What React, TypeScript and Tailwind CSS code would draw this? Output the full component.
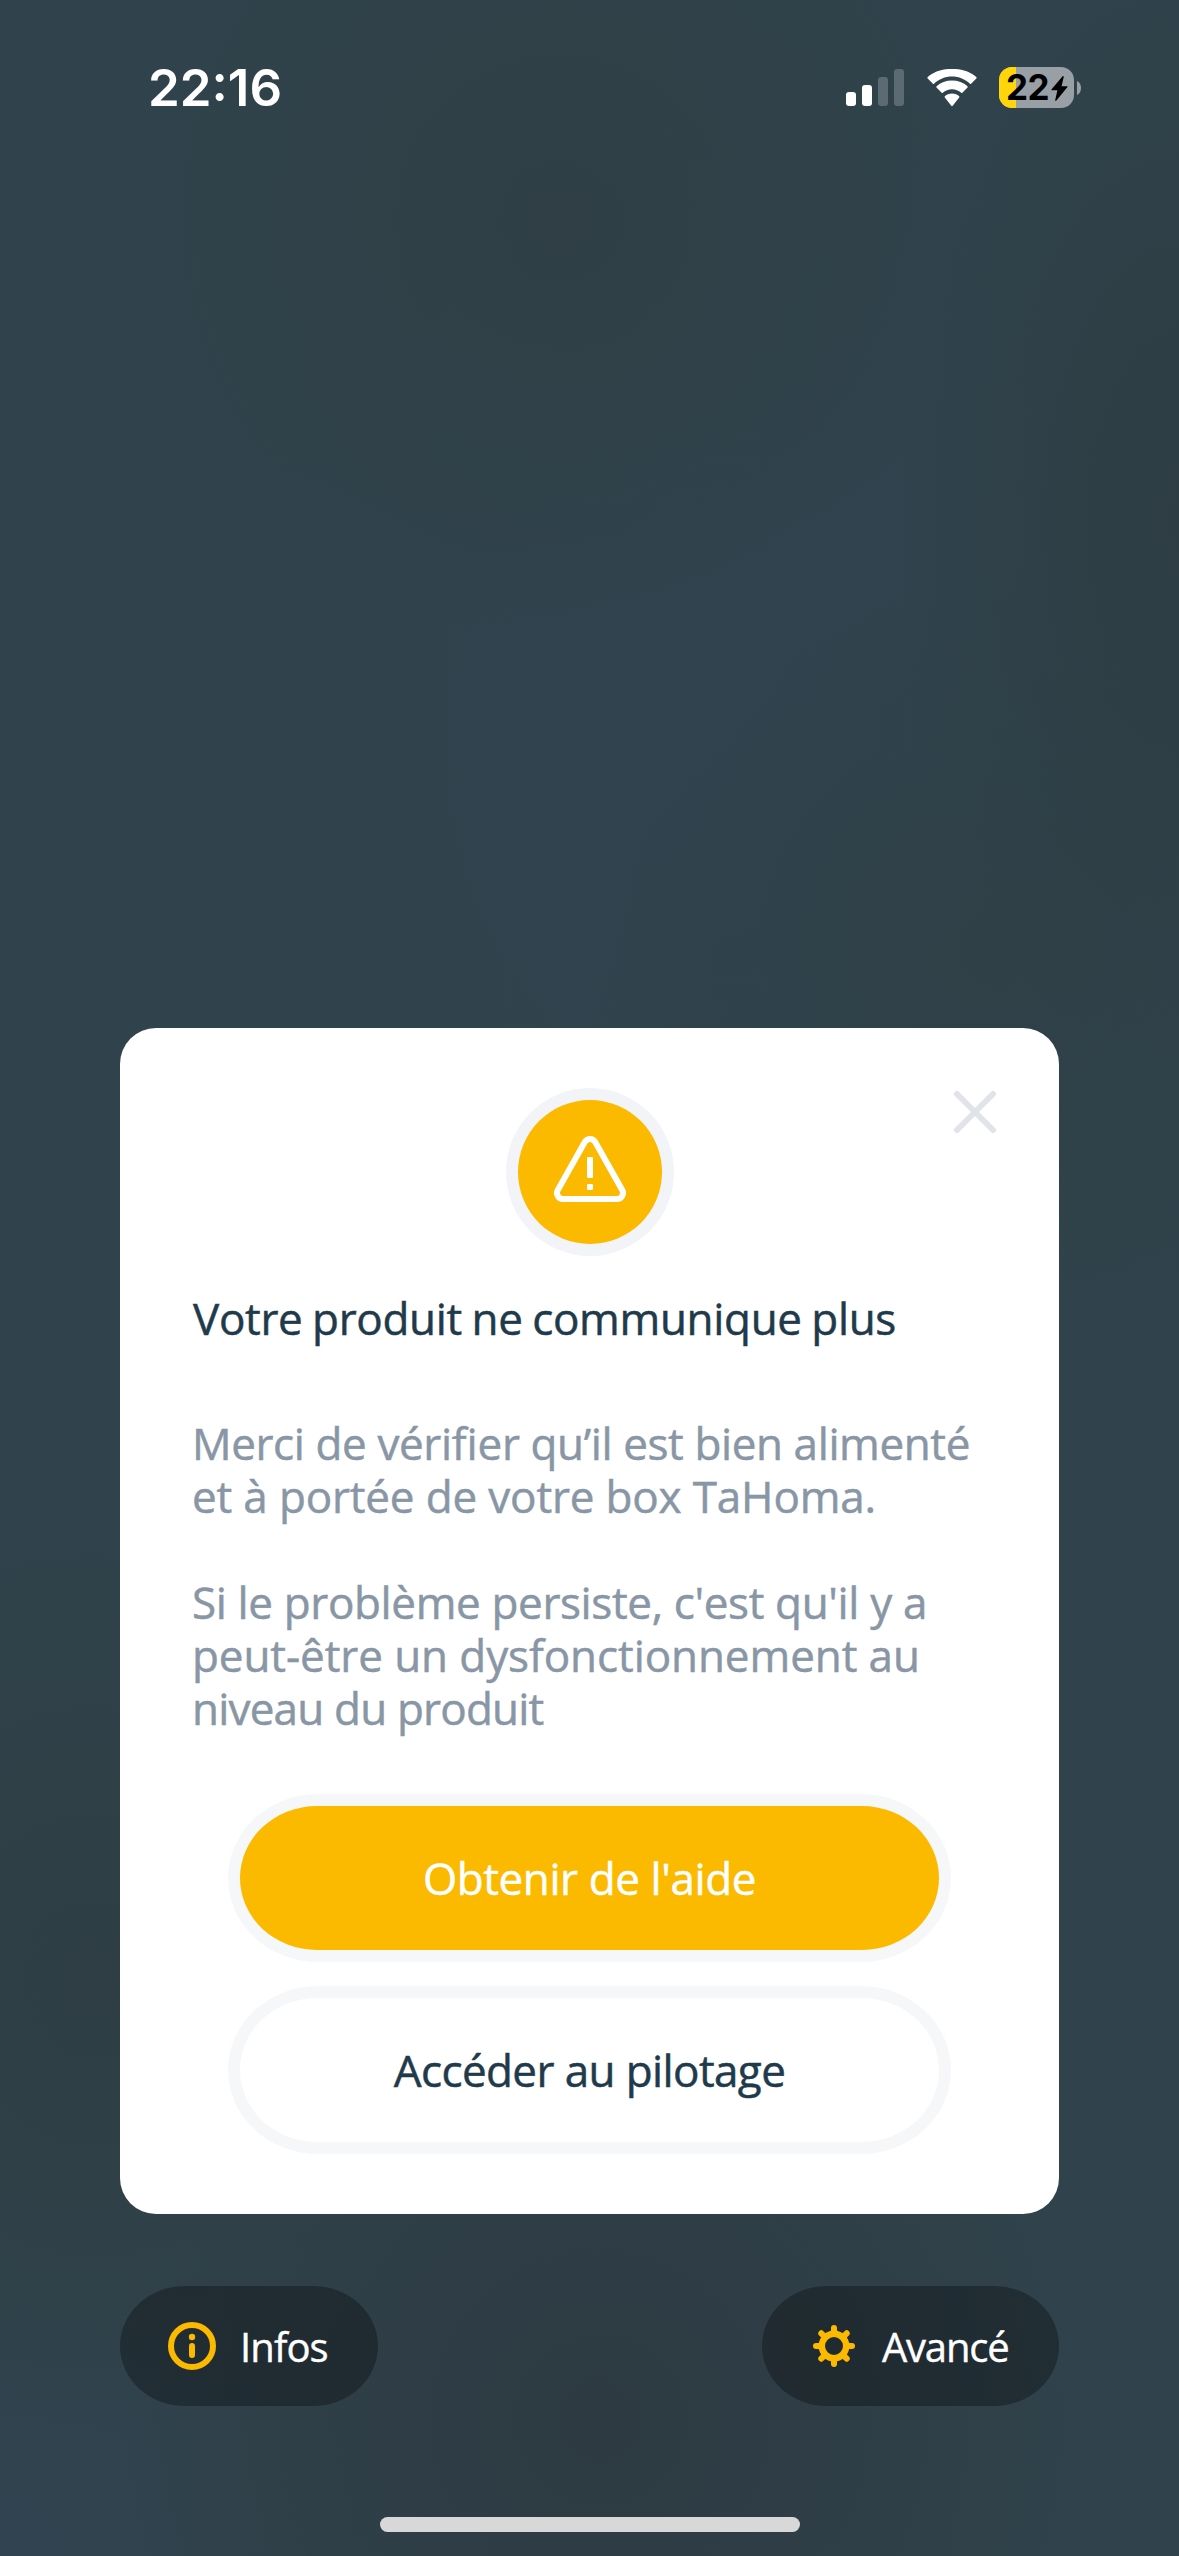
import type { ReactNode } from "react";

function SignalBars() {
  return (
    <div className="flex items-end gap-1.5">
      <div className="h-[14px] w-[10px] rounded-[3px] bg-white" />
      <div className="h-[21px] w-[10px] rounded-[3px] bg-white" />
      <div className="h-[29px] w-[10px] rounded-[3px] bg-[#5c6a73]" />
      <div className="h-[37px] w-[10px] rounded-[3px] bg-[#5c6a73]" />
    </div>
  );
}

function WifiIcon() {
  return (
    <svg className="h-[38px] w-[52px]" viewBox="0 0 52 38" fill="#fff">
      <path d="M26 7.6c6.9 0 13.200 2.700 17.900 7.100.4.3.9.3 1.200 0l5.200-5.200c.4-.4.4-1 0-1.400C43.900 2.200 35.400-.1 26-.1S8.100 2.200 1.700 8.100c-.4.4-.4 1 0 1.400l5.200 5.200c.3.3.8.3 1.200 0C12.800 10.300 19.100 7.600 26 7.600z" />
      <path d="M26 20.300c3.500 0 6.700 1.300 9.200 3.500.4.3.9.3 1.200 0l5.100-5.200c.4-.4.4-1 0-1.400-4-3.800-9.500-5.800-15.500-5.800s-11.500 2-15.500 5.800c-.4.4-.4 1 0 1.400l5.100 5.200c.3.3.8.3 1.200 0 2.500-2.200 5.700-3.500 9.200-3.500z" />
      <path d="M33.200 28.500c.4-.4.4-1 0-1.300-1.900-1.700-4.400-2.700-7.200-2.700s-5.300 1-7.200 2.700c-.4.3-.4.900 0 1.300l6.500 8.300c.4.500 1 .5 1.400 0z" />
    </svg>
  );
}

function Battery() {
  return (
    <div className="flex items-center gap-[3px]">
      <div className="relative flex h-[41px] w-[75px] items-center overflow-hidden rounded-[13px] bg-[#98a0a6] pl-[7px]">
        <div className="absolute inset-y-0 left-0 w-[17px] bg-[#ffd60a]" />
        <span className="relative font-[Inter] text-[35px] leading-[41px] font-bold tracking-[-0.6px] text-black">
          22
        </span>
        <svg className="absolute left-[51px] top-[8px] h-[27px] w-[19px]" viewBox="0 0 19 27">
          <path
            d="M12.400 1.500 1.600 14.200c-.5.6-.2 1.100.5 1.100h5.300L5.200 25c-.2 1 .6 1.300 1.200.5L17.300 12.300c.5-.6.2-1.100-.5-1.100h-5.200l2.100-9.200c.2-1-.6-1.300-1.300-.5z"
            fill="#000"
          />
        </svg>
      </div>
      <svg className="h-[14px] w-[4px]" viewBox="0 0 4 14">
        <path d="M0 0c2.300.9 4 3.600 4 7s-1.700 6.100-4 7z" fill="#98a0a6" />
      </svg>
    </div>
  );
}

function StatusBar() {
  return (
    <header className="flex h-[175px] shrink-0 items-start justify-between pl-[148px] pr-[98px]">
      <span className="mt-[58px] font-[Inter] text-[51px] leading-[60px] font-semibold text-white">
        22:16
      </span>
      <div className="mt-[67px] flex h-[41px] items-center">
        <SignalBars />
        <div className="ml-[22px] mr-[21px] flex">
          <WifiIcon />
        </div>
        <Battery />
      </div>
    </header>
  );
}

function WarningBadge() {
  return (
    <div className="flex size-[168px] items-center justify-center rounded-full bg-[#f2f4f7]">
      <div className="size-[144px] rounded-full bg-[#fbb900]">
        <svg viewBox="0 0 144 144" fill="none" className="size-full">
          <path
            d="M66.800 42a6 6 0 0 1 10.400 0L104.200 90a6 6 0 0 1-5.200 9H45a6 6 0 0 1-5.200-9z"
            stroke="#fff"
            strokeWidth="6"
          />
          <rect x="69" y="57" width="6" height="21" rx="1" fill="#fff" />
          <rect x="69" y="84" width="6" height="6" rx="1" fill="#fff" />
        </svg>
      </div>
    </div>
  );
}

function InfoIcon() {
  return (
    <svg viewBox="0 0 48 48" className="size-12" fill="none">
      <circle cx="24" cy="24" r="21" stroke="#fbb900" strokeWidth="6" />
      <circle cx="24" cy="15" r="3.200" fill="#fbb900" />
      <rect x="21" y="21" width="6" height="15" rx="3" fill="#fbb900" />
    </svg>
  );
}

const teeth = [0, 45, 90, 135, 180, 225, 270, 315];

function GearIcon() {
  return (
    <svg viewBox="0 0 48 48" className="size-12" fill="none" stroke="#fbb900">
      <circle cx="24" cy="24" r="12.200" strokeWidth="6.400" />
      {teeth.map((angle) => (
        <path
          key={angle}
          d="M24 10V6"
          strokeWidth="6"
          strokeLinecap="round"
          transform={`rotate(${angle} 24 24)`}
        />
      ))}
    </svg>
  );
}

function CloseIcon() {
  return (
    <svg viewBox="0 0 44 44" className="size-11" stroke="#e0e3e8" strokeWidth="6" strokeLinecap="round">
      <path d="M4 4l36 36M40 4L4 40" />
    </svg>
  );
}

function Pill({ icon, children }: { icon: ReactNode; children: ReactNode }) {
  return (
    <button className="flex h-[120px] items-center gap-6 rounded-[65px_/_60px] bg-black/30 pl-12 text-[40px] text-white [-webkit-text-stroke:0.4px_#fff]">
      {icon}
      <span className="pt-0.5">{children}</span>
    </button>
  );
}

export default function App() {
  return (
    <div className="relative flex h-[2556px] w-[1179px] flex-col overflow-hidden bg-[#30424b] font-['Open_Sans',sans-serif] bg-[radial-gradient(ellipse_420px_420px_at_560px_220px,#2f3f45_0%,#2f3f4500_100%),radial-gradient(ellipse_280px_560px_at_1179px_520px,#2d3d43_0%,#2d3d4300_100%),radial-gradient(ellipse_420px_400px_at_1000px_950px,#2f4047_0%,#2f404700_100%),radial-gradient(ellipse_380px_460px_at_90px_1980px,#2e3e44_0%,#2e3e4400_100%),radial-gradient(ellipse_480px_480px_at_600px_2420px,#2d3a42_0%,#2d3a4200_100%),radial-gradient(ellipse_500px_700px_at_720px_720px,#31434f_0%,#31434f00_100%),radial-gradient(ellipse_360px_300px_at_0px_2540px,#314350_0%,#31435000_100%)]">
      <StatusBar />

      <main className="mx-[120px] mt-[853px] flex h-[1186px] shrink-0 flex-col items-center rounded-[36px] bg-white pt-[60px]">
        <div className="relative flex w-full justify-center">
          <WarningBadge />
          <button aria-label="Fermer" className="absolute right-[62px] top-[2px]">
            <CloseIcon />
          </button>
        </div>

        <div className="mt-[36px] w-full whitespace-nowrap pl-[72px] text-[44px] leading-[53px]">
          <h1 className="pl-px tracking-[-0.32px] [word-spacing:-1.500px] text-[#1f3a4a] [-webkit-text-stroke:0.5px_#1f3a4a]">
            Votre produit ne communique plus
          </h1>
          <div className="mt-[72px] text-[#8896a5] [-webkit-text-stroke:0.5px_#8896a5]">
            <p className="tracking-[-0.39px]">
              Merci de véri<span className="tracking-normal">fi</span>er qu’il est bien alimenté
            </p>
            <p className="tracking-[-0.16px]">et à portée de votre box TaHoma.</p>
            <p className="mt-[53px] tracking-[-0.36px]">Si le problème persiste, c'est qu'il y a</p>
            <p className="tracking-[-0.08px]">peut-être un dysfonctionnement au</p>
            <p className="tracking-[-0.8px]">niveau du produit</p>
          </div>
        </div>

        <div className="mt-[59px] flex flex-col gap-6 text-[44px]">
          <div className="rounded-[90px_/_84px] bg-[#f5f7f9] p-3">
            <button className="h-[144px] w-[699px] rounded-[77px_/_72px] bg-[#fbb900] tracking-[-0.4px] text-white [-webkit-text-stroke:0.5px_#fff]">
              Obtenir de l'aide
            </button>
          </div>
          <div className="rounded-[90px_/_84px] bg-[#f5f7f9] p-3">
            <button className="h-[144px] w-[699px] rounded-[77px_/_72px] bg-white tracking-[-0.6px] text-[#1f3a4a] [-webkit-text-stroke:0.5px_#1f3a4a]">
              Accéder au pilotage
            </button>
          </div>
        </div>
      </main>

      <nav className="mx-[120px] mt-[72px] flex shrink-0 justify-between">
        <div className="flex w-[258px] flex-col tracking-[-0.9px]">
          <Pill icon={<InfoIcon />}>Infos</Pill>
        </div>
        <div className="flex w-[297px] flex-col tracking-[-1.2px]">
          <Pill icon={<GearIcon />}>Avancé</Pill>
        </div>
      </nav>

      <div className="mx-auto mt-[111px] h-[15px] w-[420px] shrink-0 rounded-full bg-[#d8d8d8]" />
    </div>
  );
}
